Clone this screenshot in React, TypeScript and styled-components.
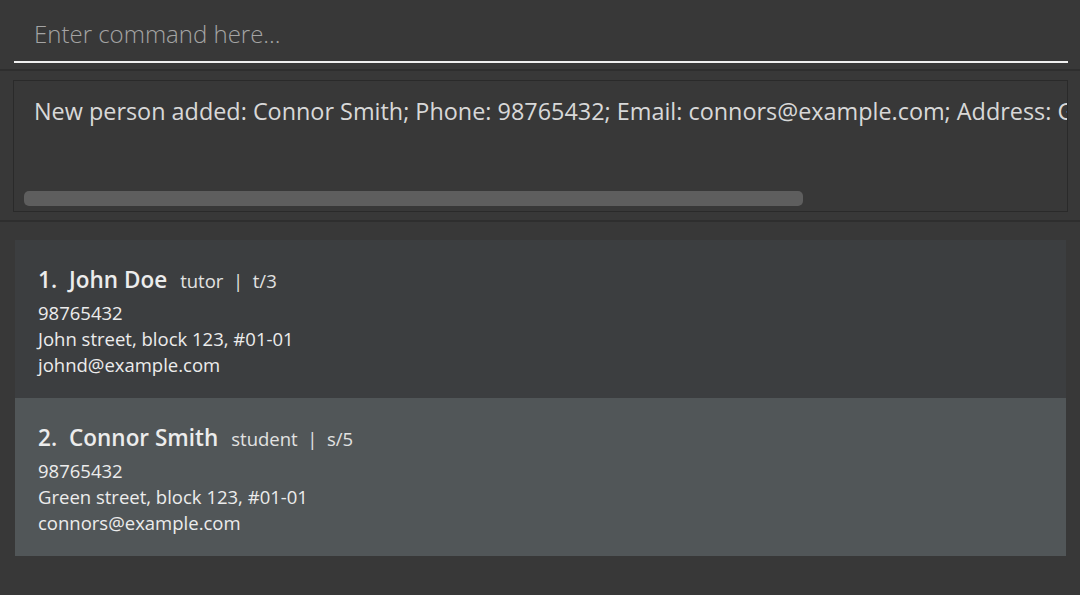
import React from "react";
import styled, { createGlobalStyle } from "styled-components";

const Global = createGlobalStyle`
  html, body { margin: 0; padding: 0; background: #383838; }
  body { font-family: "Open Sans", "Noto Sans", sans-serif; }
  #root { width: 1080px; height: 595px; overflow: hidden; }
`;

const Page = styled.div`
  width: 1080px;
  height: 595px;
  background: #383838;
  display: flex;
  flex-direction: column;
`;

const CommandSection = styled.div`
  height: 71px;
  padding: 0 12px 0 14px;
  border-bottom: 2px solid #2e2e2e;
  box-sizing: border-box;
`;

const CommandField = styled.div`
  height: 63px;
  box-sizing: border-box;
  border-bottom: 2px solid #f0f0f0;
  display: flex;
  align-items: center;
  padding: 6px 0 0 20px;
  font-size: 24px;
  color: #a4a4a4;
  font-weight: 300;
`;

const ResultSection = styled.div`
  height: 151px;
  box-sizing: border-box;
  padding: 9px 12px 8px 13px;
  border-bottom: 2px solid #2e2e2e;
`;

const ResultBox = styled.div`
  height: 132px;
  box-sizing: border-box;
  border: 1px solid #2a2a2a;
  display: flex;
  flex-direction: column;
  justify-content: space-between;
  padding: 14px 0 5px 10px;
  overflow: hidden;
`;

const ResultText = styled.div`
  white-space: nowrap;
  font-size: 23.4px;
  color: #d8d8d8;
  padding-left: 10px;
  overflow: hidden;
`;

const Scrollbar = styled.div`
  width: 779px;
  height: 15px;
  border-radius: 5px;
  background: #5e5e5e;
`;

const List = styled.div`
  padding: 18px 14px 0 15px;
  display: flex;
  flex-direction: column;
`;

const Card = styled.div<{ $selected?: boolean }>`
  height: 158px;
  box-sizing: border-box;
  background: ${(p) => (p.$selected ? "#515658" : "#3c3e40")};
  padding: 24px 23px 0;
  color: #ececec;
`;

const TitleRow = styled.div`
  display: flex;
  align-items: baseline;
  height: 36px;
`;

const Index = styled.span`
  font-size: 22.5px;
  font-weight: 600;
  margin-right: 12px;
`;

const Name = styled.span`
  font-size: 22.5px;
  font-weight: 600;
  margin-right: 13px;
`;

const Role = styled.span`
  font-size: 18.5px;
  white-space: pre;
  color: #e2e2e2;
`;

const Detail = styled.div`
  font-size: 18.5px;
  line-height: 26px;
  color: #ececec;
`;

const people = [
  {
    name: "John Doe",
    role: "tutor  |  t/3",
    phone: "98765432",
    address: "John street, block 123, #01-01",
    email: "johnd@example.com",
  },
  {
    name: "Connor Smith",
    role: "student  |  s/5",
    phone: "98765432",
    address: "Green street, block 123, #01-01",
    email: "connors@example.com",
  },
];

export default function App() {
  return (
    <Page>
      <Global />
      <CommandSection>
        <CommandField>Enter command here...</CommandField>
      </CommandSection>
      <ResultSection>
        <ResultBox>
          <ResultText>
            New person added: Connor Smith; Phone: 98765432; Email: connors@example.com; Address: Green street, block 123, #01-01
          </ResultText>
          <Scrollbar />
        </ResultBox>
      </ResultSection>
      <List>
        {people.map((p, i) => (
          <Card key={p.name} $selected={i === 1}>
            <TitleRow>
              <Index>{i + 1}.</Index>
              <Name>{p.name}</Name>
              <Role>{p.role}</Role>
            </TitleRow>
            <Detail>{p.phone}</Detail>
            <Detail>{p.address}</Detail>
            <Detail>{p.email}</Detail>
          </Card>
        ))}
      </List>
    </Page>
  );
}
